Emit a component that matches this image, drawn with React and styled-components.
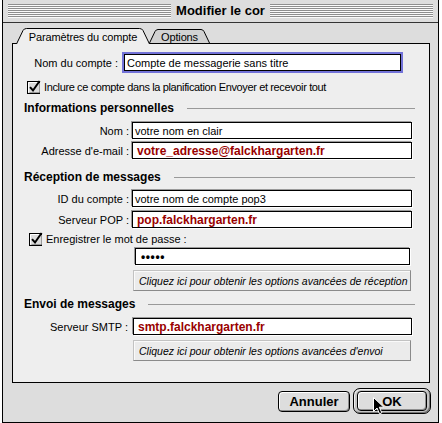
import React from 'react';
import styled, { createGlobalStyle } from 'styled-components';

const Global = createGlobalStyle`
  html, body { margin: 0; padding: 0; background: #fff; }
  body { width: 442px; height: 423px; overflow: hidden; font-family: "Liberation Sans", Arial, sans-serif; color: #000; }
  * { box-sizing: border-box; }
`;

const Screen = styled.div`
  width: 442px;
  height: 423px;
  overflow: hidden;
  background: #fff;
  padding-left: 2px;
`;

const Window = styled.div`
  position: relative;
  width: 437px;
  height: 424px;
  margin-top: -1px;
  border: 1px solid #000;
  background: #dddddd;
  display: flex;
  flex-direction: column;
`;

const TitleBar = styled.div`
  height: 23px;
  flex: none;
  display: flex;
  align-items: center;
  padding: 0 5px 1px 5px;
  border-bottom: 1px solid #333;
  background: #dddddd;
`;

const Stripes = styled.div`
  flex: 1;
  height: 14px;
  background: repeating-linear-gradient(to bottom, #8e8e8e 0 1px, #fafafa 1px 2px);
`;

const Title = styled.div`
  padding: 0 5px;
  font-weight: bold;
  font-size: 13px;
  line-height: 16px;
  white-space: nowrap;
`;

const Body = styled.div`
  flex: 1;
  display: flex;
  flex-direction: column;
  padding: 5px 8px 0 9px;
`;

const TabRow = styled.div`
  position: relative;
  z-index: 1;
  height: 16px;
  margin-bottom: -1px;
  display: flex;
  align-items: flex-end;
  padding-left: 3px;
`;

const TabShape = styled.svg`
  position: absolute;
  left: 0;
  top: 0;
`;

const Tab = styled.div`
  position: relative;
  width: ${p => p.$w}px;
  height: ${p => (p.$active ? 16 : 14)}px;
  margin-bottom: ${p => (p.$active ? 0 : 1)}px;
  margin-left: ${p => p.$ml || 0}px;
  display: flex;
  align-items: center;
  justify-content: center;
  font-size: 11px;
  letter-spacing: -0.15px;
  padding-top: 1px;
  white-space: nowrap;
`;

const TabLabel = styled.span`
  position: relative;
`;

const Panel = styled.div`
  width: 418px;
  height: 340px;
  border: 1px solid #000;
  background: #eeeeee;
  padding: 0 14px 0 11px;
  display: flex;
  flex-direction: column;
`;

const Row = styled.div`
  display: flex;
  align-items: center;
  height: ${p => p.$h || 17}px;
  margin-top: ${p => p.$mt || 0}px;
  padding-left: ${p => p.$ml || 0}px;
`;

const Label = styled.div`
  width: ${p => p.$w}px;
  margin-right: ${p => p.$gap}px;
  text-align: right;
  font-size: 11px;
  white-space: nowrap;
`;

const Field = styled.div`
  width: ${p => p.$w}px;
  height: 17px;
  border: 1px solid #000;
  background: #fff;
  display: flex;
  align-items: center;
  white-space: nowrap;
  overflow: hidden;
  padding-left: ${p => (p.$accent ? 4 : 2)}px;
  font-size: ${p => (p.$accent ? 12 : 11)}px;
  font-weight: ${p => (p.$accent ? 'bold' : 'normal')};
  color: ${p => (p.$accent ? '#990000' : '#000')};
  box-shadow: ${p => (p.$focused ? '0 0 0 2px #7272d8' : '-1px -1px 0 #9a9a9a, 1px 1px 0 #ffffff')};
`;

const Dots = styled.span`
  font-size: 12px;
  font-weight: bold;
  letter-spacing: 0.6px;
  padding-left: 3px;
`;

const CheckText = styled.span`
  font-size: 11px;
  margin-left: 3px;
  letter-spacing: ${p => (p.$tight ? '-0.37px' : '0')};
  white-space: nowrap;
`;

const Heading = styled.div`
  display: flex;
  align-items: center;
  height: 14px;
  margin-top: ${p => p.$mt}px;
  gap: 13px;
  font-weight: bold;
  font-size: 12px;
  white-space: nowrap;
`;

const Rule = styled.div`
  flex: 1;
  height: 1px;
  background: #999;
`;

const OptionsButton = styled.div`
  width: 278px;
  height: 21px;
  margin-top: ${p => p.$mt}px;
  margin-left: 109px;
  border: 1px solid;
  border-color: #c2c2c2 #8a8a8a #8a8a8a #c2c2c2;
  background: #ebebeb;
  box-shadow: inset 1px 1px 0 #fafafa;
  display: flex;
  align-items: center;
  padding-left: 5px;
  font-size: 10.5px;
  font-style: italic;
  white-space: nowrap;
`;

const ButtonBar = styled.div`
  display: flex;
  justify-content: flex-end;
  align-items: center;
  gap: 3px;
  margin-top: 5px;
  margin-right: -1px;
`;

const PushButton = styled.div`
  width: ${p => p.$w}px;
  height: ${p => p.$h}px;
  border: 1px solid #000;
  border-radius: 4px;
  background: #dddddd;
  box-shadow: inset 1px 1px 0 #fff, inset -1px -1px 0 #8e8e8e;
  display: flex;
  align-items: center;
  justify-content: center;
  font-weight: bold;
  font-size: 13px;
`;

const DefaultRing = styled.div`
  width: 78px;
  height: 26px;
  border: 1px solid #000;
  border-radius: 7px;
  background: #c4c4c4;
  box-shadow: inset 1px 1px 0 #eee, inset -1px -1px 0 #777;
  display: flex;
  align-items: center;
  justify-content: center;
`;

const Cursor = styled.svg`
  position: absolute;
  left: 370px;
  top: 397px;
`;

function CheckBox() {
  return (
    <svg width="14" height="14" viewBox="0 0 14 14">
      <rect x="0.5" y="1.5" width="12" height="12" fill="#dcdcdc" stroke="#000" />
      <path d="M1.5 12.5V2.5H11.5" stroke="#fff" fill="none" />
      <path d="M2.5 12.5H12.5V3" stroke="#9a9a9a" fill="none" />
      <path d="M3 7.2L6 10.5L12.6 1" stroke="#000" strokeWidth="2" fill="none" />
    </svg>
  );
}

function TabBg({ w, h, fill }) {
  const r = w - 0.5;
  const big = h === 16;
  const d = `M0.5 ${h} L${big ? 7 : 6} 2.5 Q${big ? 8 : 7} 0.5 ${big ? 10.5 : 9} 0.5 L${r - (big ? 10 : 8.5)} 0.5 Q${r - (big ? 7.5 : 6.5)} 0.5 ${r - (big ? 6.5 : 5.5)} 2.5 L${r} ${h}`;
  return (
    <TabShape width={w} height={h} viewBox={`0 0 ${w} ${h}`}>
      <path d={`${d} Z`} fill={fill} stroke="none" />
      <path d={d} fill="none" stroke="#000" />
    </TabShape>
  );
}

export default function App() {
  return (
    <Screen>
      <Global />
      <Window>
        <TitleBar>
          <Stripes />
          <Title>Modifier le cor</Title>
          <Stripes />
        </TitleBar>
        <Body>
          <TabRow>
            <Tab $active $w={134} $ml={1}>
              <TabBg w={134} h={16} fill="#eeeeee" />
              <TabLabel>Paramètres du compte</TabLabel>
            </Tab>
            <Tab $w={61} $ml={-1}>
              <TabBg w={61} h={14} fill="#d2d2d2" />
              <TabLabel>Options</TabLabel>
            </Tab>
          </TabRow>
          <Panel>
            <Row $mt={10}>
              <Label $w={94} $gap={6}>Nom du compte :</Label>
              <Field $w={277} $focused>Compte de messagerie sans titre</Field>
            </Row>
            <Row $mt={9} $h={14} $ml={3}>
              <CheckBox />
              <CheckText $tight>Inclure ce compte dans la planification Envoyer et recevoir tout</CheckText>
            </Row>
            <Heading $mt={7}>
              Informations personnelles
              <Rule />
            </Heading>
            <Row $mt={7}>
              <Label $w={105} $gap={3}>Nom :</Label>
              <Field $w={280}>votre nom en clair</Field>
            </Row>
            <Row $mt={3}>
              <Label $w={105} $gap={3}>Adresse d'e-mail :</Label>
              <Field $w={280} $accent>votre_adresse@falckhargarten.fr</Field>
            </Row>
            <Heading $mt={11}>
              Réception de messages
              <Rule />
            </Heading>
            <Row $mt={6}>
              <Label $w={105} $gap={3}>ID du compte :</Label>
              <Field $w={280}>votre nom de compte pop3</Field>
            </Row>
            <Row $mt={4}>
              <Label $w={105} $gap={3}>Serveur POP :</Label>
              <Field $w={280} $accent>pop.falckhargarten.fr</Field>
            </Row>
            <Row $mt={4} $h={14} $ml={5}>
              <CheckBox />
              <CheckText>Enregistrer le mot de passe :</CheckText>
            </Row>
            <Row $mt={2} $ml={111}>
              <Field $w={275}><Dots>•••••</Dots></Field>
            </Row>
            <OptionsButton $mt={5}>Cliquez ici pour obtenir les options avancées de réception</OptionsButton>
            <Heading $mt={6}>
              Envoi de messages
              <Rule />
            </Heading>
            <Row $mt={7}>
              <Label $w={104} $gap={5}>Serveur SMTP :</Label>
              <Field $w={279} $accent>smtp.falckhargarten.fr</Field>
            </Row>
            <OptionsButton $mt={5}>Cliquez ici pour obtenir les options avancées d'envoi</OptionsButton>
          </Panel>
          <ButtonBar>
            <PushButton $w={72} $h={21}>Annuler</PushButton>
            <DefaultRing>
              <PushButton $w={70} $h={20}>OK</PushButton>
            </DefaultRing>
          </ButtonBar>
        </Body>
        <Cursor width="12" height="18" viewBox="0 0 12 18">
          <path d="M0.5 0.5L0.5 14.5L4 11L6.5 16.8L8.8 15.8L6.3 10.2L10.8 10.2Z" fill="#000" stroke="#fff" strokeWidth="1" />
        </Cursor>
      </Window>
    </Screen>
  );
}
